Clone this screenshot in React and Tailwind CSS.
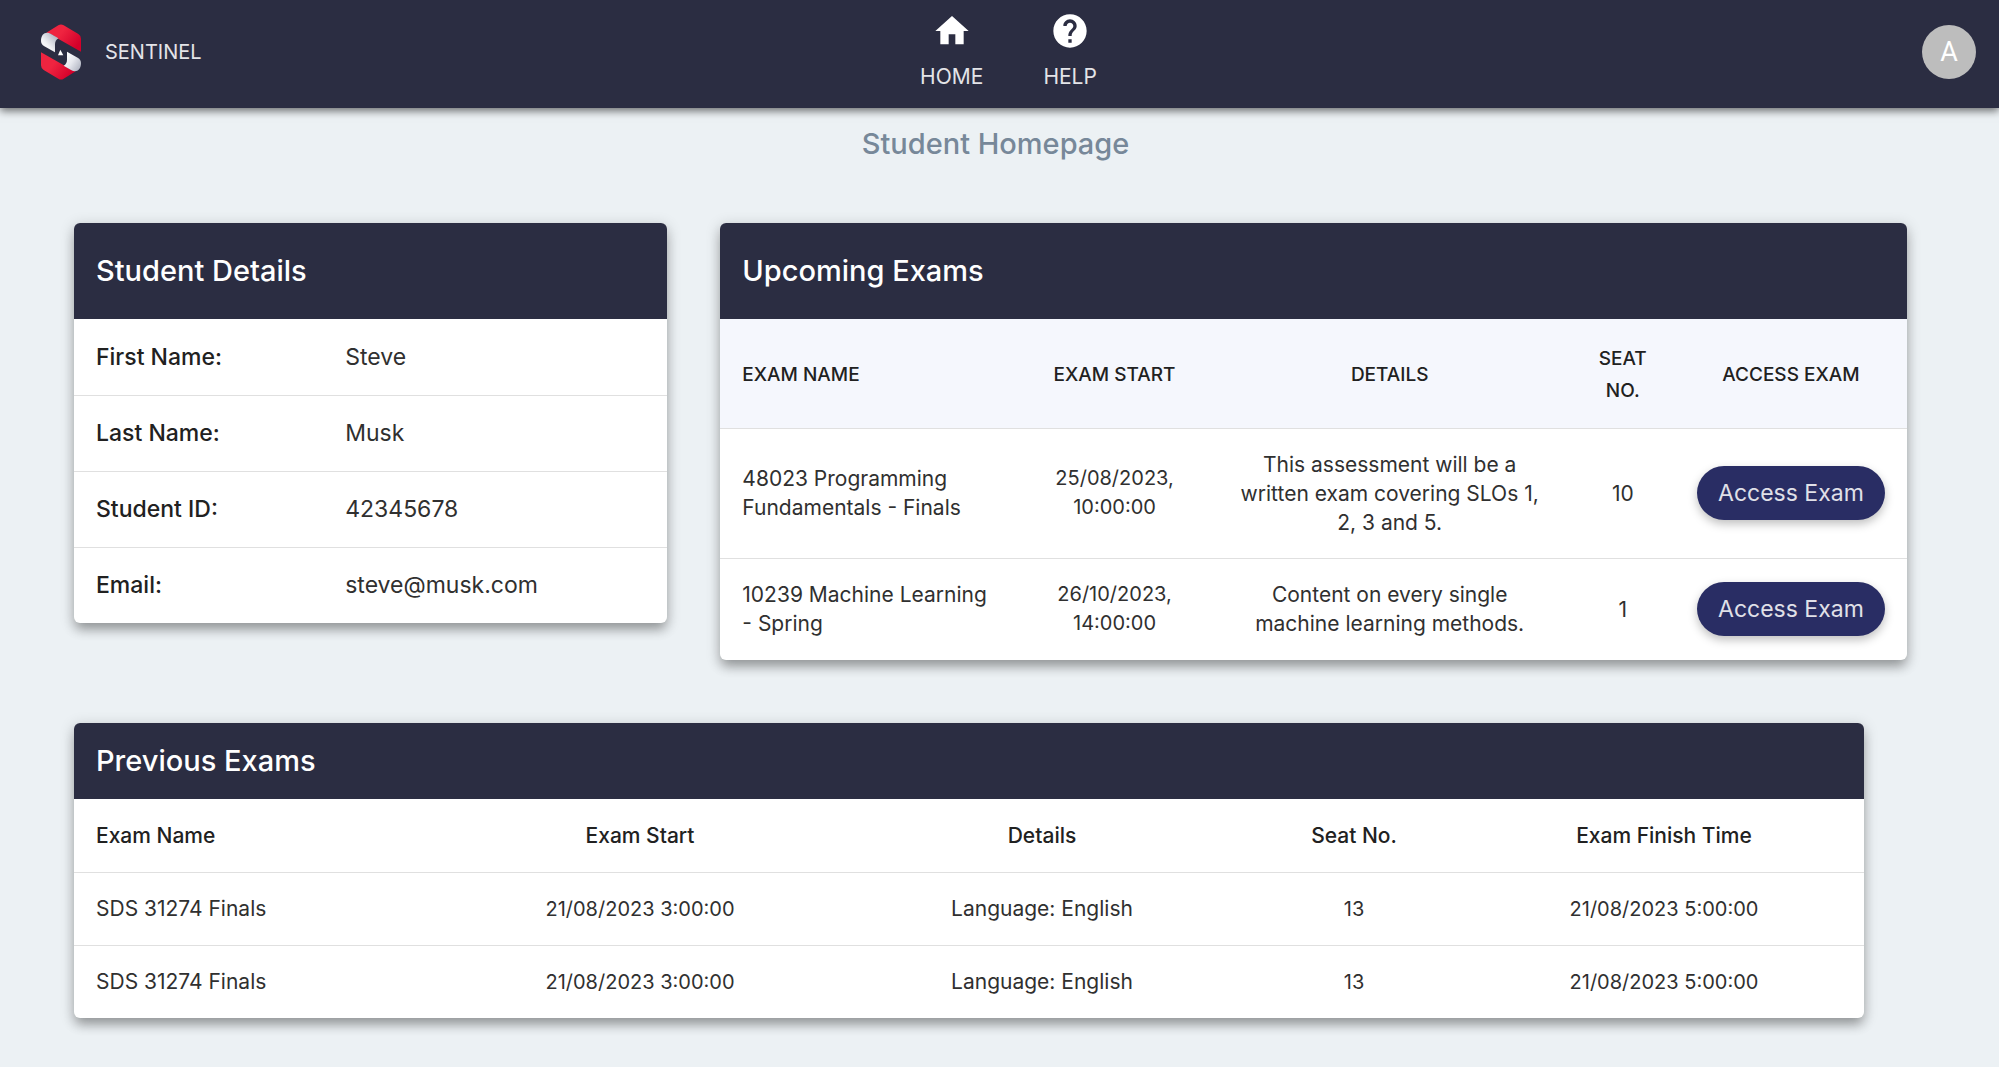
import { MdHome, MdHelp } from "react-icons/md";

const CARD =
  "overflow-hidden rounded-md bg-white shadow-[0_8px_12px_-2px_rgba(0,0,0,0.3),0_3px_14px_2px_rgba(0,0,0,0.14)]";

const details = [
  ["First Name:", "Steve"],
  ["Last Name:", "Musk"],
  ["Student ID:", "42345678"],
  ["Email:", "steve@musk.com"],
];

const upcoming = [
  {
    name: "48023 Programming Fundamentals - Finals",
    start: "25/08/2023, 10:00:00",
    details: "This assessment will be a written exam covering SLOs 1, 2, 3 and 5.",
    seat: "10",
    height: "h-[130px]",
  },
  {
    name: "10239 Machine Learning - Spring",
    start: "26/10/2023, 14:00:00",
    details: "Content on every single machine learning methods.",
    seat: "1",
    height: "h-[102px]",
  },
];

const previous = [1, 2].map((id) => ({
  id,
  name: "SDS 31274 Finals",
  start: "21/08/2023 3:00:00",
  details: "Language: English",
  seat: "13",
  finish: "21/08/2023 5:00:00",
}));

function Logo() {
  return (
    <svg viewBox="0 0 120 166" className="h-14 w-10" aria-hidden="true">
      <defs>
        <linearGradient id="red" x1="0" y1="0" x2="1" y2="0.6">
          <stop offset="0.45" stopColor="#ef2440" />
          <stop offset="1" stopColor="#d4002a" />
        </linearGradient>
        <linearGradient id="silver" x1="0.1" y1="0.9" x2="0.8" y2="0.2">
          <stop offset="0" stopColor="#ffffff" />
          <stop offset="0.4" stopColor="#f1f2f5" />
          <stop offset="1" stopColor="#b9bdc9" />
        </linearGradient>
        <linearGradient id="silverLow" x1="0.1" y1="0.2" x2="0.9" y2="0.8">
          <stop offset="0" stopColor="#ffffff" />
          <stop offset="0.5" stopColor="#e6e8ee" />
          <stop offset="1" stopColor="#b9bdc9" />
        </linearGradient>
      </defs>
      <path d="M16 25 L52 3 Q60 -2 68 3 L112 29 Q120 34 120 43 V82 L46 40 Q30 27 16 25Z" fill="url(#red)" />
      <path d="M104 141 L68 163 Q60 168 52 163 L8 137 Q0 132 0 123 V84 L74 126 Q90 139 104 141Z" fill="url(#red)" />
      <path d="M0 50 C0 28 15 20 30 29 L52 42 Q42 48 42 60 V84 L10 66 Q0 60 0 50Z" fill="url(#silver)" />
      <path d="M120 116 C120 138 105 146 90 137 L68 124 Q78 118 78 106 V82 L110 100 Q120 106 120 116Z" fill="url(#silverLow)" />
      <path d="M58 76 L67 93 H51Z" fill="#ffffff" />
    </svg>
  );
}

function NavLink({ icon: Icon, label }) {
  return (
    <a href="#" className="flex flex-col items-center gap-3 text-[21px] leading-7">
      <Icon className="size-10 text-white" aria-hidden="true" />
      {label}
    </a>
  );
}

export default function App() {
  return (
    <div className="min-h-screen bg-[#ecf1f4] pb-12 font-[Inter,sans-serif] text-[#303030]">
      <header className="grid h-[108px] grid-cols-[1fr_auto_1fr] items-center bg-[#2b2d42] pr-[23px] pb-1 pl-[41px] text-[#e4e4e8] shadow-[0_3px_8px_rgba(0,0,0,0.55)]">
        <a href="#" className="flex items-center gap-6 text-[20px]">
          <Logo />
          SENTINEL
        </a>
        <nav className="flex gap-[60px] pb-0.5">
          <NavLink icon={MdHome} label="HOME" />
          <NavLink icon={MdHelp} label="HELP" />
        </nav>
        <button
          type="button"
          aria-label="Account"
          className="flex size-[54px] items-center justify-center justify-self-end rounded-full bg-[#bdbdbd] font-[Roboto,sans-serif] text-[27px] text-white"
        >
          A
        </button>
      </header>

      <h1 className="pt-[18px] pr-2 text-center text-[29px] leading-9 font-medium text-[#778899]">
        Student Homepage
      </h1>

      <main className="pr-[92px] pl-[74px]">
        <div className="mt-[61px] grid grid-cols-[1fr_2fr] items-start gap-[53px]">
          <section className={CARD}>
            <h2 className="flex h-24 items-center bg-[#2b2d42] px-[22px] text-[29px] font-medium text-white">
              Student Details
            </h2>
            <table className="w-full table-fixed text-left text-[23px]">
              <colgroup>
                <col className="w-[42%]" />
                <col />
              </colgroup>
              <tbody>
                {details.map(([label, value]) => (
                  <tr key={label} className="h-[76px] border-b border-[#e0e0e0] last:border-0">
                    <th scope="row" className="px-[22px] font-medium text-[#212121]">{label}</th>
                    <td className="px-[22px]">{value}</td>
                  </tr>
                ))}
              </tbody>
            </table>
          </section>

          <section className={CARD}>
            <h2 className="flex h-24 items-center bg-[#2b2d42] px-[22px] text-[29px] font-medium text-white">
              Upcoming Exams
            </h2>
            <table className="w-full table-fixed text-center text-[21px] leading-[29px]">
              <colgroup>
                <col className="w-[300px]" />
                <col className="w-[188px]" />
                <col className="w-[362px]" />
                <col className="w-[104px]" />
                <col className="w-[232px]" />
              </colgroup>
              <thead>
                <tr className="h-[109px] border-b border-[#e0e0e0] bg-[#f5f7fd] text-[19px] leading-8 text-[#212121]">
                  <th scope="col" className="px-[22px] pt-1 text-left font-medium">EXAM NAME</th>
                  <th scope="col" className="px-[22px] pt-1 font-medium">EXAM START</th>
                  <th scope="col" className="px-[22px] pt-1 font-medium">DETAILS</th>
                  <th scope="col" className="px-[22px] pt-1 font-medium">SEAT NO.</th>
                  <th scope="col" className="px-[22px] pt-1 font-medium">ACCESS EXAM</th>
                </tr>
              </thead>
              <tbody>
                {upcoming.map((exam) => (
                  <tr key={exam.name} className={`${exam.height} border-b border-[#e0e0e0] last:border-0`}>
                    <td className="px-[22px] text-left">{exam.name}</td>
                    <td className="px-[22px] text-[20px]">{exam.start}</td>
                    <td className="px-[22px]">{exam.details}</td>
                    <td className="px-[22px]">{exam.seat}</td>
                    <td className="px-[22px]">
                      <button
                        type="button"
                        className="h-[54px] w-full rounded-full bg-[#292d64] text-[23px] whitespace-nowrap text-[#e0e0e8] shadow-[0_4px_10px_rgba(0,0,0,0.25)]"
                      >
                        Access Exam
                      </button>
                    </td>
                  </tr>
                ))}
              </tbody>
            </table>
          </section>
        </div>

        <section className={`${CARD} mt-[63px] mr-[43px]`}>
          <h2 className="flex h-[76px] items-center bg-[#2b2d42] px-[22px] text-[29px] font-medium text-white">
            Previous Exams
          </h2>
          <table className="w-full table-fixed text-center text-[21px]">
            <colgroup>
              <col className="w-[366px]" />
              <col className="w-[400px]" />
              <col className="w-[404px]" />
              <col className="w-[220px]" />
              <col className="w-[400px]" />
            </colgroup>
            <thead>
              <tr className="h-[73px] border-b border-[#e0e0e0] text-[#212121]">
                <th scope="col" className="px-[22px] text-left font-medium">Exam Name</th>
                <th scope="col" className="px-[22px] font-medium">Exam Start</th>
                <th scope="col" className="px-[22px] font-medium">Details</th>
                <th scope="col" className="px-[22px] font-medium">Seat No.</th>
                <th scope="col" className="px-[22px] font-medium">Exam Finish Time</th>
              </tr>
            </thead>
            <tbody>
              {previous.map((exam) => (
                <tr key={exam.id} className="h-[73px] border-b border-[#e0e0e0] last:border-0">
                  <td className="px-[22px] text-left">{exam.name}</td>
                  <td className="px-[22px] text-[20px]">{exam.start}</td>
                  <td className="px-[22px]">{exam.details}</td>
                  <td className="px-[22px] text-[20px]">{exam.seat}</td>
                  <td className="px-[22px] text-[20px]">{exam.finish}</td>
                </tr>
              ))}
            </tbody>
          </table>
        </section>
      </main>
    </div>
  );
}
